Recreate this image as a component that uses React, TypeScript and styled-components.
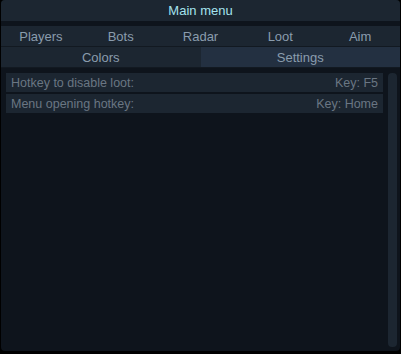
import styled, { createGlobalStyle } from "styled-components";

const GlobalStyle = createGlobalStyle`
  html, body {
    margin: 0;
    padding: 0;
    background: #000;
  }
  body {
    font-family: "Liberation Sans", Arial, sans-serif;
  }
`;

const Screen = styled.div`
  width: 401px;
  height: 354px;
  background: #000;
  padding: 0 1px 3px 1px;
  box-sizing: border-box;
`;

const Panel = styled.div`
  height: 351px;
  background: #0e141c;
  border-radius: 4px;
  display: flex;
  flex-direction: column;
  overflow: hidden;
`;

const TitleBar = styled.div`
  height: 21px;
  background: #1c2631;
  color: #a4e2ee;
  font-size: 13px;
  display: flex;
  align-items: center;
  justify-content: center;
  margin-bottom: 5px;
`;

const TabRow = styled.div<{ $cols: number }>`
  display: grid;
  grid-template-columns: repeat(${({ $cols }) => $cols}, 1fr);
  height: 20px;
  border-bottom: 1px solid #121921;
`;

const Tab = styled.div<{ $active?: boolean }>`
  background: ${({ $active }) => ($active ? "#233041" : "#1c2631")};
  color: #8a9cad;
  font-size: 13px;
  display: flex;
  align-items: center;
  justify-content: center;
`;

const Content = styled.div`
  flex: 1;
  display: flex;
  padding: 5px 3px 4px 5px;
  min-height: 0;
`;

const List = styled.div`
  flex: 1;
  display: flex;
  flex-direction: column;
  gap: 2px;
`;

const Row = styled.div`
  height: 19px;
  background: #1c2631;
  color: #6a7683;
  font-size: 12.5px;
  display: flex;
  align-items: center;
  justify-content: space-between;
  padding: 0 5px 0 5px;
`;

const Scrollbar = styled.div`
  width: 9px;
  margin-left: 5px;
  background: #1c2631;
  border-radius: 4px;
`;

const mainTabs = ["Players", "Bots", "Radar", "Loot", "Aim"];

const hotkeys = [
  { label: "Hotkey to disable loot:", value: "Key: F5" },
  { label: "Menu opening hotkey:", value: "Key: Home" },
];

export default function App() {
  return (
    <>
      <GlobalStyle />
      <Screen>
        <Panel>
          <TitleBar>Main menu</TitleBar>
          <TabRow $cols={5}>
            {mainTabs.map((t) => (
              <Tab key={t}>{t}</Tab>
            ))}
          </TabRow>
          <TabRow $cols={2}>
            <Tab>Colors</Tab>
            <Tab $active>Settings</Tab>
          </TabRow>
          <Content>
            <List>
              {hotkeys.map((h) => (
                <Row key={h.label}>
                  <span>{h.label}</span>
                  <span>{h.value}</span>
                </Row>
              ))}
            </List>
            <Scrollbar />
          </Content>
        </Panel>
      </Screen>
    </>
  );
}
